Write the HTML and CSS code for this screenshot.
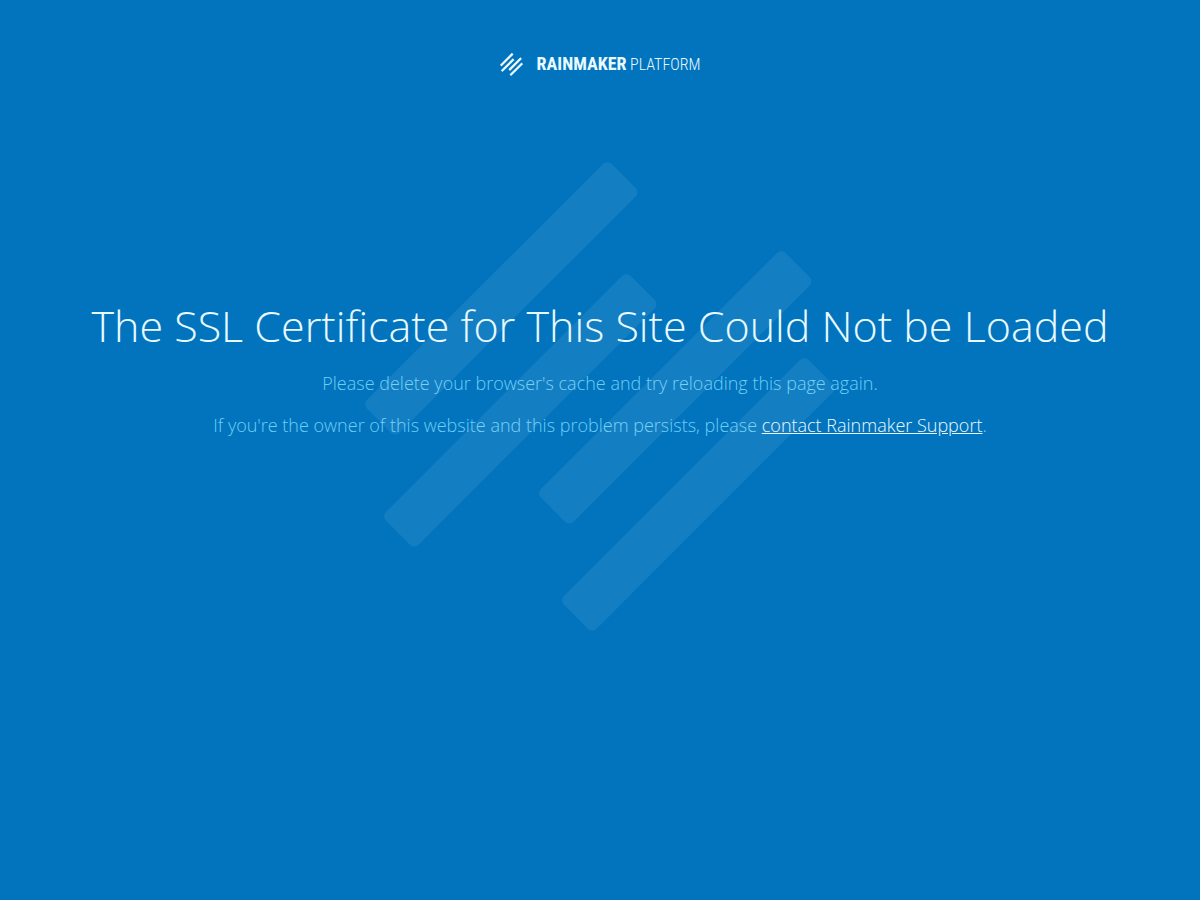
FILE: index.html
```html
<!DOCTYPE html>
<html lang="en">
<head>
    <meta charset="UTF-8">
    <meta name="viewport" content="width=device-width, initial-scale=1.0">
    <title>SSL Certificate Could Not be Loaded</title>
    <link rel="stylesheet" href="styles.css">
</head>
<body>
    <header class="site-header">
        <div class="logo">
            <svg class="logo-mark" viewBox="0 0 470 470" aria-hidden="true">
                <rect x="-36" y="113" width="346" height="47" rx="6" transform="rotate(-45 137 137)"/>
                <rect x="-17" y="225" width="346" height="47" rx="6" transform="rotate(-45 156 249)"/>
                <rect x="138" y="202" width="346" height="47" rx="6" transform="rotate(-45 311 226)"/>
                <rect x="161" y="309" width="346" height="47" rx="6" transform="rotate(-45 334 333)"/>
            </svg>
            <span class="logo-text"><strong>RAINMAKER</strong> PLATFORM</span>
        </div>
    </header>

    <main class="message">
        <svg class="watermark" viewBox="0 0 470 470" aria-hidden="true">
            <rect x="-36" y="113" width="346" height="46" rx="6" transform="rotate(-45 137 137)"/>
            <rect x="-17" y="225" width="346" height="46" rx="6" transform="rotate(-45 156 249)"/>
            <rect x="138" y="202" width="346" height="46" rx="6" transform="rotate(-45 311 226)"/>
            <rect x="161" y="309" width="346" height="46" rx="6" transform="rotate(-45 334 333)"/>
        </svg>
        <div class="message-text">
            <h1>The SSL Certificate for This Site Could Not be Loaded</h1>
            <p>Please delete your browser's cache and try reloading this page again.</p>
            <p>If you're the owner of this website and this problem persists, please <a href="#">contact Rainmaker Support</a>.</p>
        </div>
    </main>
</body>
</html>
```
FILE: styles.css
```css
body {
    background-color: #0274be;
    color: #6dcff6;
    font-family: "Open Sans", sans-serif;
    font-size: 18px;
    font-weight: 300;
    line-height: 26px;
    margin: 0;
    text-align: center;
}

.site-header {
    padding: 52px 20px 0;
}

.logo {
    display: flex;
    align-items: center;
    justify-content: center;
    gap: 14px;
    height: 24px;
    color: #e8faff;
}

.logo-mark {
    width: 23px;
    height: 23px;
    fill: #e8faff;
}

.logo-text {
    font-family: "Roboto Condensed", "Open Sans Condensed", "Liberation Sans Narrow", sans-serif;
    font-size: 16px;
    line-height: 24px;
    white-space: nowrap;
}

.logo-text strong {
    font-size: 18px;
    font-weight: 700;
}

/* Text sits on top of the large faded mark */
.message {
    display: grid;
    justify-items: center;
    margin-top: 86px;
    padding: 0 20px;
}

.watermark,
.message-text {
    grid-area: 1 / 1;
}

.watermark {
    width: 100%;
    max-width: 470px;
    fill: #e8faff;
    opacity: 0.08;
}

.message-text {
    padding-top: 136px;
}

h1 {
    color: #e8faff;
    font-size: 43px;
    font-weight: 300;
    line-height: 56px;
    margin: 0 0 16px;
}

p {
    margin: 0 0 16px;
}

a {
    color: #e8faff;
}
```
